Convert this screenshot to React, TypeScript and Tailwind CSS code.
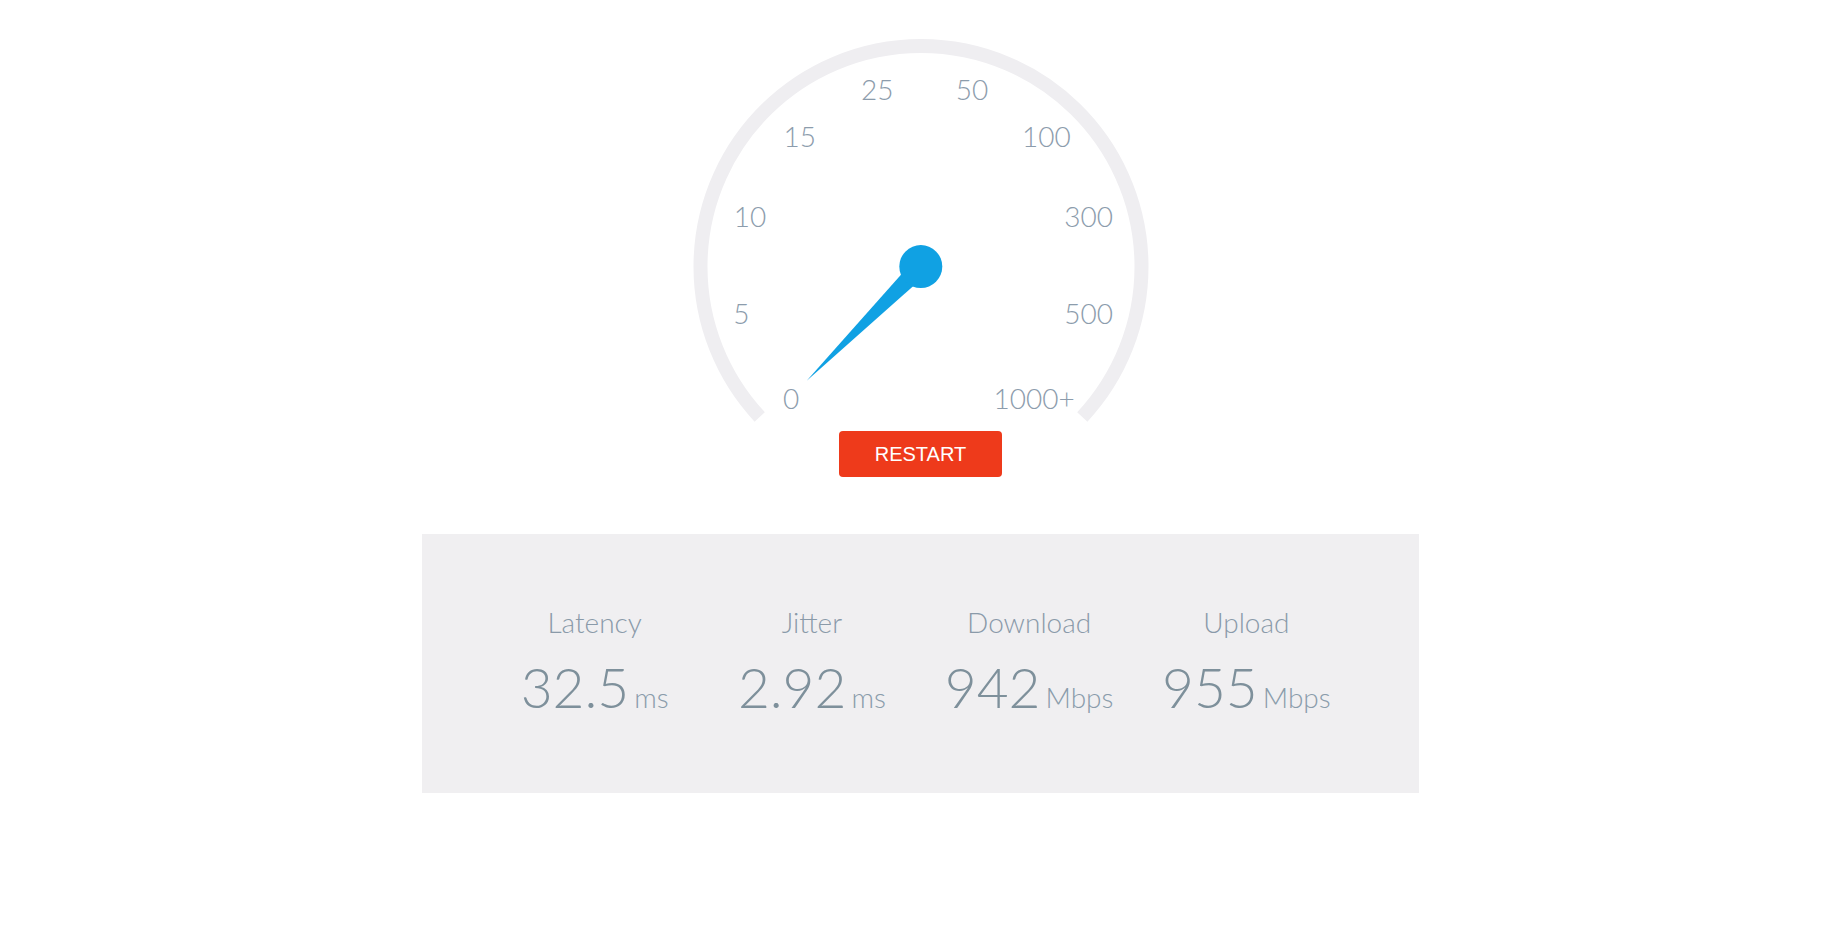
import React from "react";

const labels: { t: string; x: number; y: number }[] = [
  { t: "0", x: 791, y: 408.5 },
  { t: "5", x: 741.3, y: 323.5 },
  { t: "10", x: 750, y: 227 },
  { t: "15", x: 799.7, y: 147 },
  { t: "25", x: 877.3, y: 99.5 },
  { t: "50", x: 972, y: 99.5 },
  { t: "100", x: 1046.3, y: 147 },
  { t: "300", x: 1088.7, y: 227 },
  { t: "500", x: 1088.7, y: 323.5 },
  { t: "1000+", x: 1034.2, y: 408.5 },
];

const stats = [
  { label: "Latency", value: "32.5", unit: "ms" },
  { label: "Jitter", value: "2.92", unit: "ms" },
  { label: "Download", value: "942", unit: "Mbps" },
  { label: "Upload", value: "955", unit: "Mbps" },
];

function Gauge() {
  const ox = 681;
  return (
    <svg width={480} height={428} viewBox="0 0 480 428" className="block">
      <path
        d="M 78.7 416.9 A 220.5 220.5 0 1 1 401.3 416.9"
        fill="none"
        stroke="#efeef1"
        strokeWidth={14}
      />
      {labels.map((l) => (
        <text
          key={l.t}
          x={l.x - ox}
          y={l.y}
          textAnchor="middle"
          fill="#8c9cac"
          style={{ fontFamily: "Lato, sans-serif", fontWeight: 300, fontSize: 28 }}
        >
          {l.t}
        </text>
      ))}
      <polygon points="125.7,380.7 246.7,273.2 233.3,259.8" fill="#10a1e3" />
      <circle cx={239.8} cy={266.6} r={21.5} fill="#10a1e3" />
    </svg>
  );
}

export default function App() {
  return (
    <div className="min-h-[945px] w-full bg-white pr-[7px] font-['Lato',sans-serif]">
      <div className="flex flex-col items-center">
        <Gauge />
        <button className="mt-[3px] flex h-[46px] w-[163px] items-center justify-center rounded-[4px] bg-[#ee3a1b] font-['Liberation_Sans',Arial,sans-serif] text-[20px] text-white">
          RESTART
        </button>
        <div className="mt-[57px] h-[259px] w-[997px] bg-[#f0eff1] px-[64px]">
          <div className="grid grid-cols-4">
            {stats.map((s) => (
              <div key={s.label} className="flex flex-col items-center pt-[70px]">
                <div className="text-[28px] leading-[36px] font-light text-[#8a9aa9]">
                  {s.label}
                </div>
                <div className="mt-[16px] flex items-baseline leading-[62px]">
                  <span className="text-[55px] font-light text-[#7e909b]">{s.value}</span>
                  <span className="ml-[5px] text-[28px] font-light text-[#8a9cab]">{s.unit}</span>
                </div>
              </div>
            ))}
          </div>
        </div>
      </div>
    </div>
  );
}
